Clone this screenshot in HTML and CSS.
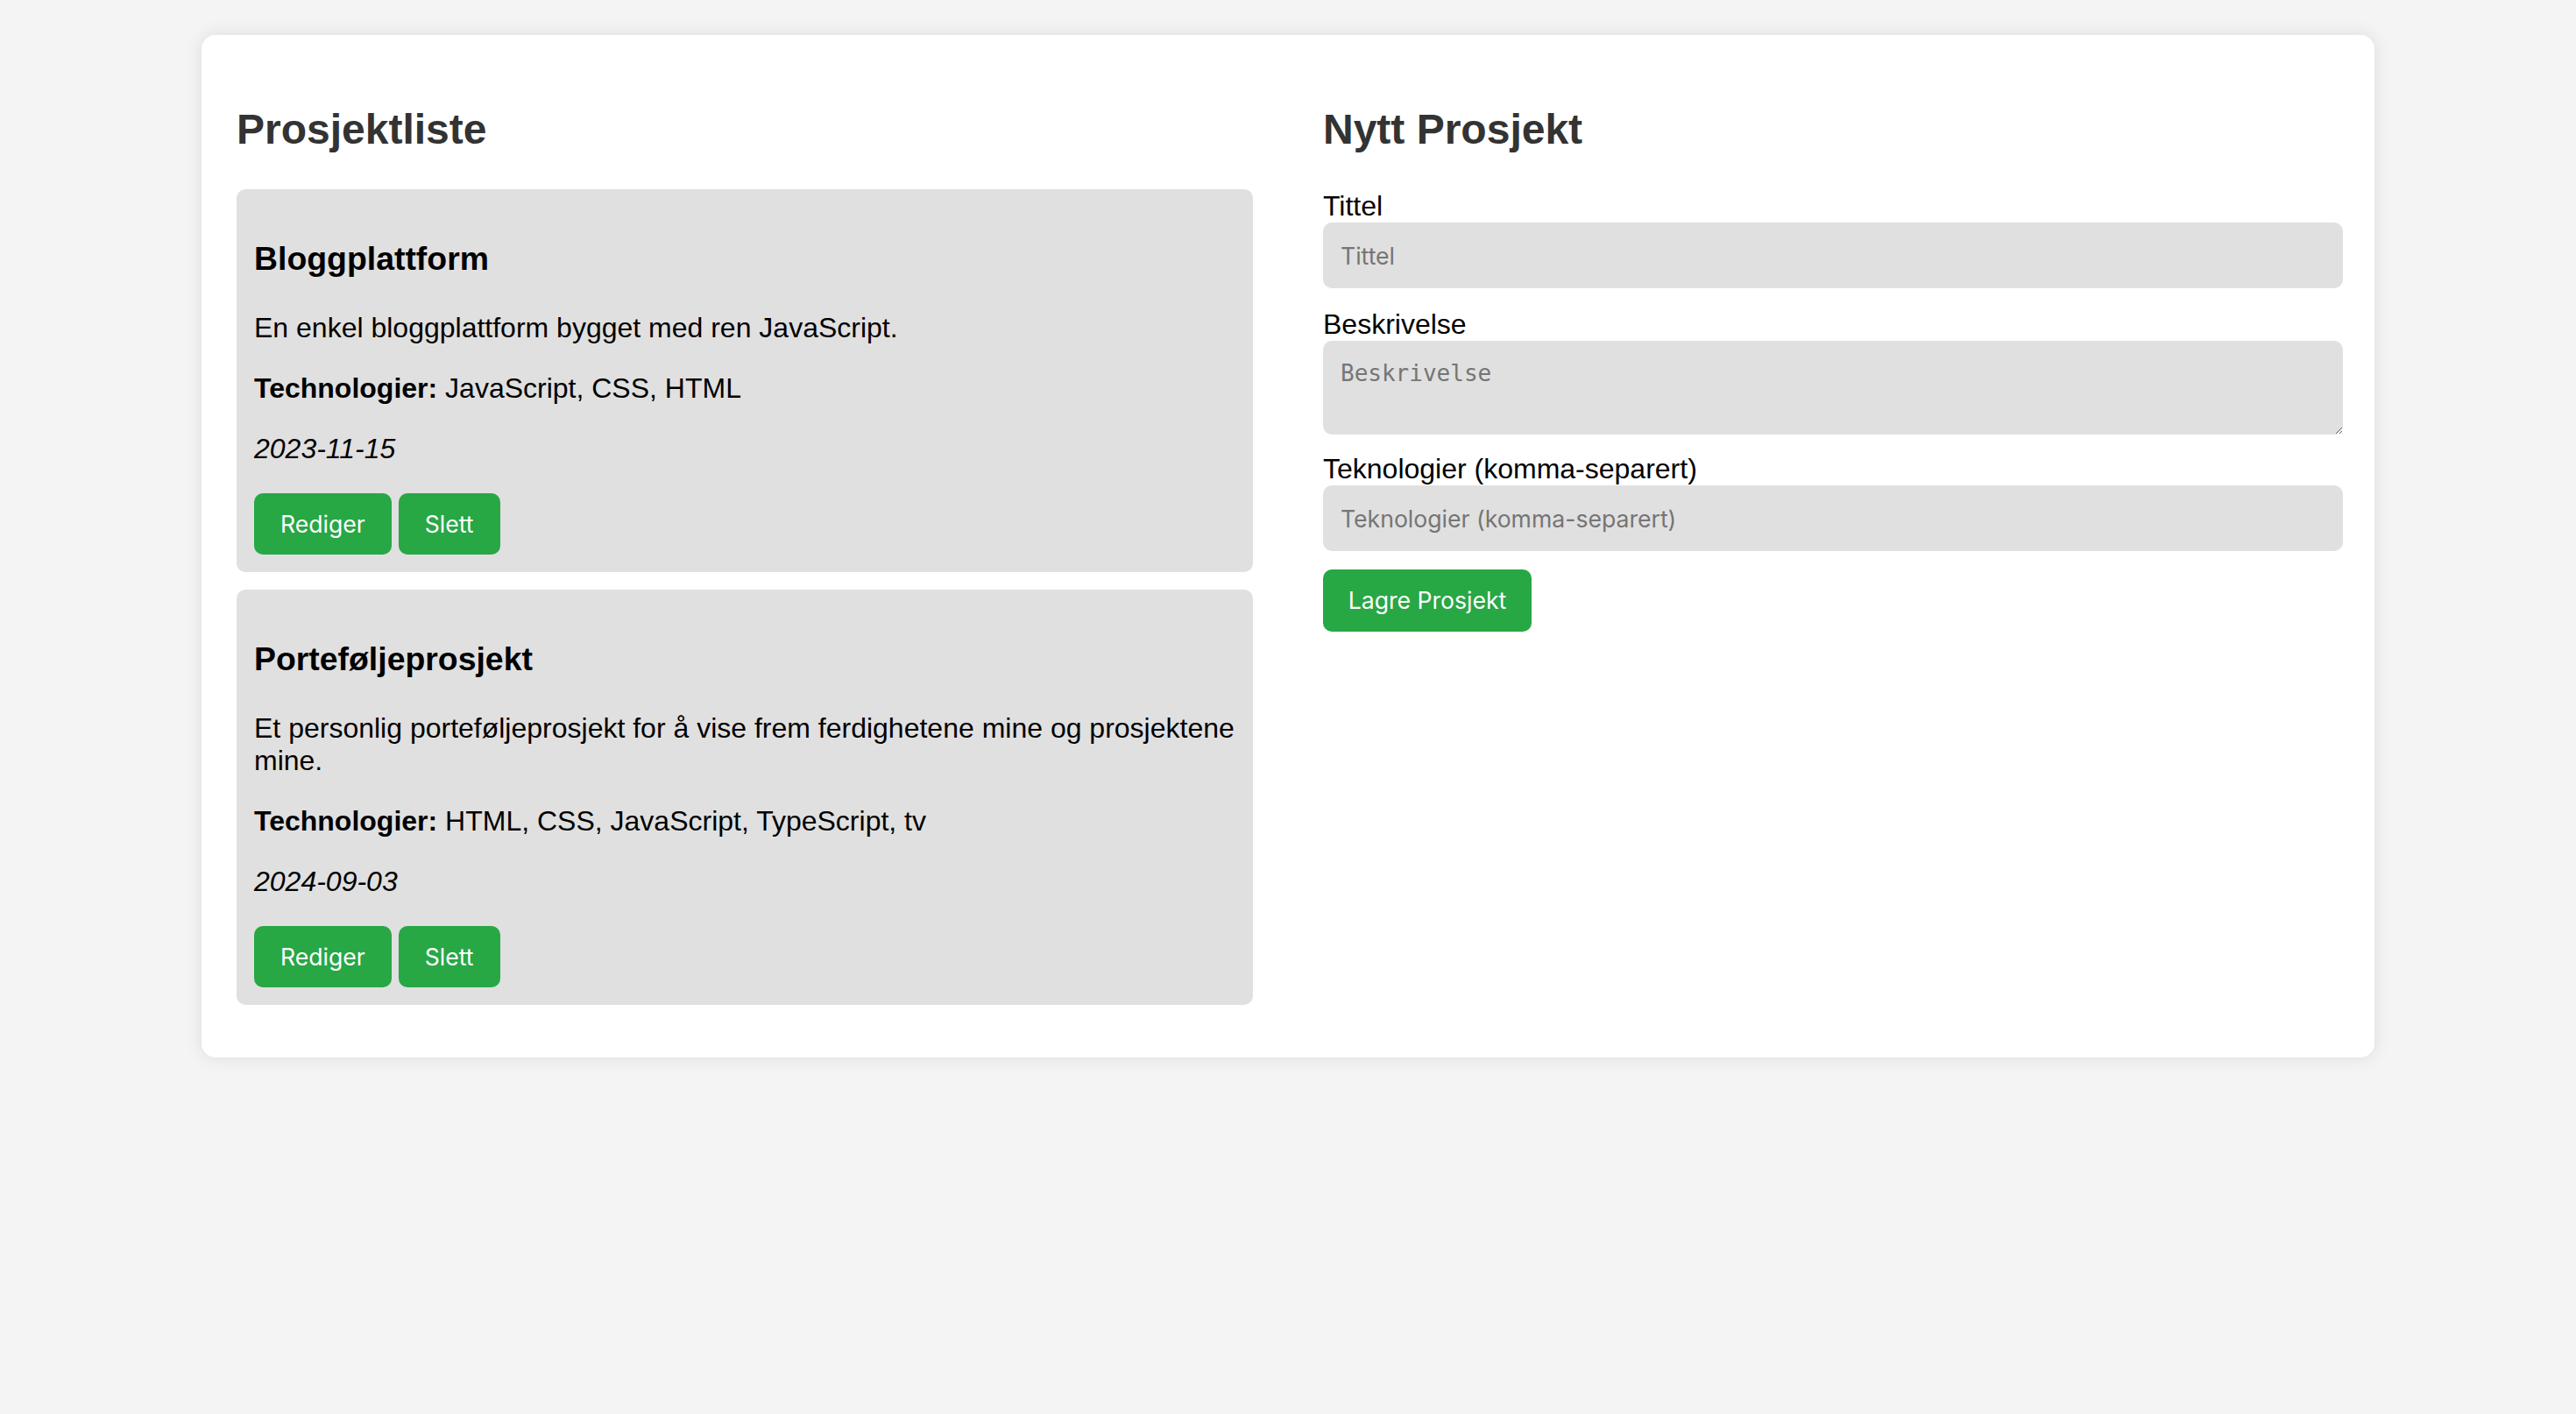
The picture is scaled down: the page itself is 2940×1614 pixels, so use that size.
FILE: index.html
```html
<!DOCTYPE html>
<html lang="no">
<head>
<meta charset="utf-8">
<title>Prosjekter</title>
<link rel="stylesheet" href="styles.css">
</head>
<body>
<div class="container">
  <section class="list-col">
    <h2 class="section-title">Prosjektliste</h2>
    <div class="project-card">
      <h3 class="project-title">Bloggplattform</h3>
      <p class="project-text">En enkel bloggplattform bygget med ren JavaScript.</p>
      <p class="project-text"><strong>Technologier:</strong> JavaScript, CSS, HTML</p>
      <p class="project-text"><em>2023-11-15</em></p>
      <div class="actions">
        <button class="btn">Rediger</button>
        <button class="btn">Slett</button>
      </div>
    </div>
    <div class="project-card">
      <h3 class="project-title">Porteføljeprosjekt</h3>
      <p class="project-text">Et personlig porteføljeprosjekt for å vise frem ferdighetene mine og prosjektene mine.</p>
      <p class="project-text"><strong>Technologier:</strong> HTML, CSS, JavaScript, TypeScript, tv</p>
      <p class="project-text"><em>2024-09-03</em></p>
      <div class="actions">
        <button class="btn">Rediger</button>
        <button class="btn">Slett</button>
      </div>
    </div>
  </section>
  <section class="form-col">
    <h2 class="section-title">Nytt Prosjekt</h2>
    <form class="project-form">
      <label class="field-label" for="tittel">Tittel</label>
      <input class="field" id="tittel" type="text" placeholder="Tittel">
      <label class="field-label" for="beskrivelse">Beskrivelse</label>
      <textarea class="field field-area" id="beskrivelse" placeholder="Beskrivelse"></textarea>
      <label class="field-label" for="tek">Teknologier (komma-separert)</label>
      <input class="field field-last" id="tek" type="text" placeholder="Teknologier (komma-separert)">
      <div class="form-actions">
        <button class="btn btn-save" type="button">Lagre Prosjekt</button>
      </div>
    </form>
  </section>
</div>
</body>
</html>
```

FILE: styles.css
```css
html, body {
  margin: 0;
  padding: 0;
}
body {
  background: #f4f4f4;
  font-family: "Liberation Sans", Arial, sans-serif;
  font-size: 32px;
  color: #000;
  padding: 40px 0;
}
.container {
  width: 2400px;
  margin: 0 auto;
  padding: 40px;
  background: #fff;
  border-radius: 16px;
  box-shadow: 0 0 20px rgba(0, 0, 0, 0.1);
  display: grid;
  grid-template-columns: 1160px 1160px;
  column-gap: 80px;
  align-items: start;
}
.section-title {
  font-size: 48px;
  font-weight: bold;
  color: #333;
  margin: 40px 0;
  line-height: 56px;
}
.project-card {
  background: #e0e0e0;
  border-radius: 10px;
  padding: 20px;
  margin-bottom: 20px;
}
.project-title {
  font-size: 37.4px;
  font-weight: bold;
  margin: 38px 0 39px;
  line-height: 43px;
}
.project-text {
  margin: 32px 0;
  line-height: 37px;
}
.actions {
  display: flex;
  gap: 8px;
  margin-top: 32px;
}
.btn {
  font-family: Inter, "Noto Sans", sans-serif;
  font-size: 26.6px;
  color: #fff;
  background: #28a745;
  border: none;
  border-radius: 10px;
  height: 70px;
  padding: 0 30px;
  line-height: 1;
}
.project-form {
  display: flex;
  flex-direction: column;
  align-items: flex-start;
}
.field-label {
  display: block;
  line-height: 38px;
  height: 38px;
}
.field {
  box-sizing: border-box;
  width: 1164px;
  height: 75px;
  background: #e0e0e0;
  border: none;
  border-radius: 10px;
  padding: 0 20px;
  font-family: Inter, "Noto Sans", sans-serif;
  font-size: 26.6px;
  color: #333;
  margin: 0 0 22px;
  outline: none;
}
.field::placeholder {
  color: #757575;
}
.field-area {
  height: 107px;
  padding: 22px 20px;
  font-family: "DejaVu Sans Mono", "Liberation Mono", monospace;
  font-size: 26px;
  line-height: 31px;
  resize: vertical;
  margin-bottom: 20px;
}
.field-last {
  margin-bottom: 21px;
}
.form-actions {
  display: flex;
}
.btn-save {
  width: 238px;
  height: 71px;
  padding: 0;
}
```
